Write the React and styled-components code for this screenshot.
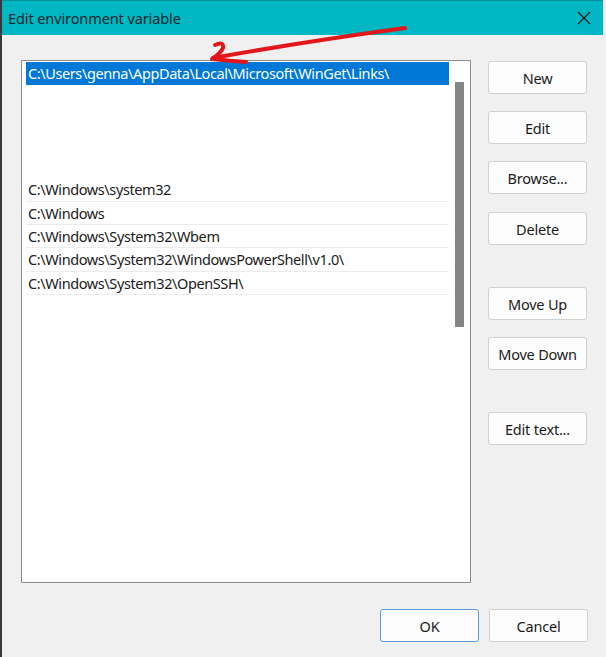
import React from "react";
import styled, { createGlobalStyle } from "styled-components";

const GlobalStyle = createGlobalStyle`
  html, body { margin: 0; padding: 0; background: #f0f0f0; }
  body { font-family: "Noto Sans", "Open Sans", sans-serif; }
`;

const Window = styled.div`
  position: relative;
  width: 606px;
  height: 657px;
  background: #f0f0f0;
  border-left: 2px solid #3a3a3a;
  box-sizing: border-box;
  display: flex;
  flex-direction: column;
  overflow: hidden;
`;

const TitleBar = styled.div`
  height: 35px;
  flex-shrink: 0;
  background: #00b7c3;
  border-top: 1px solid #0a8f99;
  box-sizing: border-box;
  margin-right: 3px;
  display: flex;
  align-items: center;
  justify-content: space-between;
  padding: 0 12px 1px 6px;
  color: #10262a;
  font-size: 14.5px;
  letter-spacing: -0.1px;
`;

const CloseIcon = styled.svg`
  width: 14px;
  height: 14px;
`;

const Body = styled.div`
  flex: 1;
  display: flex;
  flex-direction: column;
  padding: 25px 18px 0 19px;
`;

const Main = styled.div`
  display: flex;
  gap: 17px;
`;

const ListBox = styled.div`
  width: 450px;
  height: 523px;
  box-sizing: border-box;
  border: 1px solid #8c8c8c;
  background: #fff;
  display: flex;
  padding: 1px 0 0 4px;
`;

const Items = styled.div`
  flex: 1;
  display: flex;
  flex-direction: column;
`;

const Item = styled.div`
  height: 23.3px;
  flex-shrink: 0;
  box-sizing: border-box;
  line-height: 23.5px;
  padding-left: 2px;
  font-size: 14.5px;
  letter-spacing: -0.4px;
  white-space: nowrap;
  color: ${(p) => (p.selected ? "#fff" : "#1a1a1a")};
  background: ${(p) => (p.selected ? "#0078d7" : "transparent")};
  border-bottom: 1px solid ${(p) => (p.empty || p.selected ? "transparent" : "#ececec")};
`;

const Track = styled.div`
  width: 21px;
  display: flex;
  justify-content: center;
  padding-top: 20px;
`;

const Thumb = styled.div`
  width: 9px;
  height: 245px;
  background: #858585;
`;

const ButtonColumn = styled.div`
  display: flex;
  flex-direction: column;
  padding-top: 1px;
`;

const Button = styled.button`
  width: 99px;
  height: 33px;
  margin-top: ${(p) => p.gap || 0}px;
  box-sizing: border-box;
  background: #fdfdfd;
  border: 1px solid ${(p) => (p.primary ? "#5b9bd5" : "#d0d0d0")};
  border-radius: 3px;
  font-family: "Noto Sans", "Open Sans", sans-serif;
  font-size: 14.5px;
  letter-spacing: -0.2px;
  color: #1a1a1a;
  padding: 0;
`;

const Footer = styled.div`
  display: flex;
  justify-content: flex-end;
  gap: 10px;
  padding-top: 26px;
`;

const Arrow = styled.svg`
  position: absolute;
  left: 0;
  top: 0;
  width: 606px;
  height: 120px;
  pointer-events: none;
`;

const paths = [
  "C:\\Windows\\system32",
  "C:\\Windows",
  "C:\\Windows\\System32\\Wbem",
  "C:\\Windows\\System32\\WindowsPowerShell\\v1.0\\",
  "C:\\Windows\\System32\\OpenSSH\\",
];

export default function App() {
  return (
    <>
      <GlobalStyle />
      <Window>
        <TitleBar>
          <span>Edit environment variable</span>
          <CloseIcon viewBox="0 0 14 14">
            <path d="M1 1 L13 13 M13 1 L1 13" stroke="#1a1a1a" strokeWidth="1.2" />
          </CloseIcon>
        </TitleBar>
        <Body>
          <Main>
            <ListBox>
              <Items>
                <Item selected>C:\Users\genna\AppData\Local\Microsoft\WinGet\Links\</Item>
                <Item empty />
                <Item empty />
                <Item empty />
                <Item empty />
                {paths.map((p) => (
                  <Item key={p}>{p}</Item>
                ))}
              </Items>
              <Track>
                <Thumb />
              </Track>
            </ListBox>
            <ButtonColumn>
              <Button>New</Button>
              <Button gap={17}>Edit</Button>
              <Button gap={17}>Browse...</Button>
              <Button gap={18}>Delete</Button>
              <Button gap={42}>Move Up</Button>
              <Button gap={17}>Move Down</Button>
              <Button gap={42}>Edit text...</Button>
            </ButtonColumn>
          </Main>
          <Footer>
            <Button primary>OK</Button>
            <Button>Cancel</Button>
          </Footer>
        </Body>
        <Arrow viewBox="0 0 606 120">
          <g fill="none" stroke="#e3161b" strokeWidth="4" strokeLinecap="round" strokeLinejoin="round">
            <path d="M403 28 Q 300 42 211 58" />
            <path d="M213 45 Q 222 41 221 48 Q 218 54 210 59 Q 228 61 244 62" />
          </g>
        </Arrow>
      </Window>
    </>
  );
}
